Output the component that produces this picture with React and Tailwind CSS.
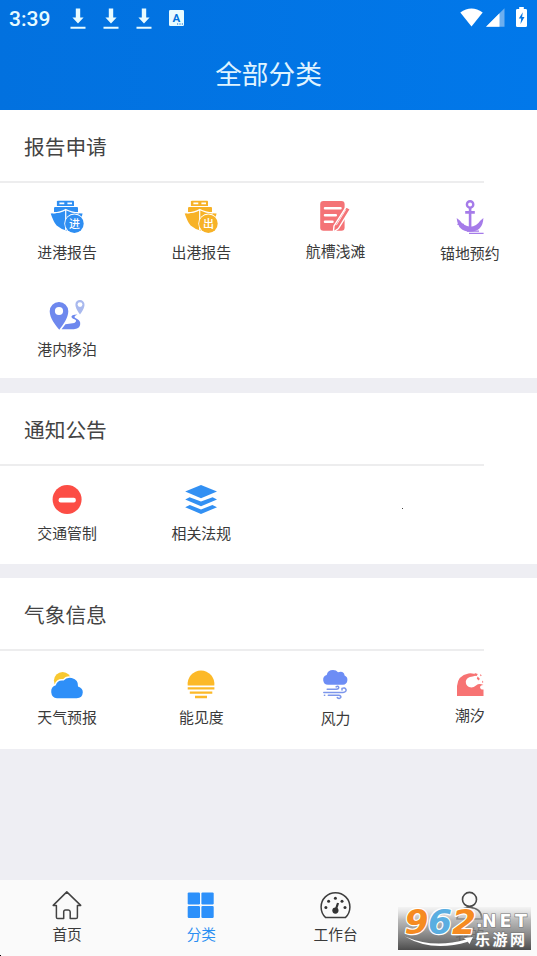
import React from "react";

const Icon = ({ children }) => (
  <svg viewBox="0 0 40 40" className="h-10 w-10 shrink-0" fill="none">
    {children}
  </svg>
);

const Ship = ({ color, mark }) => (
  <Icon>
    <g transform="translate(3 3)">
      <path d="M8 .8H23.2Q24 .8 24 1.6V6H6.9V1.6Q6.9 .8 8 .8Z" fill={color} />
      <path d="M9.4 3.4H14.3M17.4 3.4H22" stroke="#fff" strokeWidth="1.8" />
      <path d="M5.2 7.1H27Q28 7.1 28 8.1V12H4V8.1Q4 7.1 5.2 7.1Z" fill={color} />
      <path d="M.7 13.4Q10 13.4 15.7 9.8Q22 13.4 32.6 13.4Q31 22 24 29L16.4 30.4Q11 29.4 6.6 25.6Q3.4 21.6 .7 13.4Z" fill={color} />
      <path d="M3.2 12.8Q11 12.4 15.7 9.4Q21 12.4 29 12.8M15.7 10V30" stroke="#fff" strokeWidth="1.2" />
      <circle cx="24.4" cy="23.7" r="10.1" fill="#fff" />
      <circle cx="24.4" cy="23.7" r="9.3" fill={color} />
      <text x="24.4" y="27.8" textAnchor="middle" fontSize="11" fontWeight="500" fill="#fff" className="font-['Noto_Sans_CJK_SC',sans-serif]">{mark}</text>
    </g>
  </Icon>
);

const Note = () => (
  <Icon>
    <rect x="4.2" y="4" width="24.4" height="29.8" rx="3.2" fill="#f47376" />
    <path d="M9 11.3H24.5M9 18.2H19.8M9 24.8H16.5" stroke="#fff" strokeWidth="2.5" strokeLinecap="round" />
    <path d="M30.3 9.8L34.4 12.2L22.4 31.6L17.4 35L18 28.9Z" fill="#f47376" stroke="#fff" strokeWidth="1.4" />
    <path d="M29.8 12.6L20.3 28.2" stroke="#fff" strokeWidth=".8" />
  </Icon>
);

const Anchor = () => (
  <Icon>
    <g stroke="#a57be9">
      <circle cx="20.1" cy="7.4" r="3.2" strokeWidth="2.4" />
      <path d="M20.1 10.5V32M15.2 15.4H24.8" strokeWidth="2.6" />
      <path d="M17 34.2H29M19 36.4H33.6M7.4 27.4H14M9.4 29.7H15" strokeWidth="1.2" />
    </g>
    <path d="M6.7 21L9.8 23.6Q13.6 29.2 20.1 29.8Q26.8 29.2 30.2 23.8L33.4 21Q32.8 34.6 20.1 34.8Q7.8 34.4 6.7 21Z" fill="#a57be9" />
  </Icon>
);

const Route = () => (
  <Icon>
    <path d="M12 8A9.2 9.2 0 0 0 2.7 17.3C2.7 24 8.6 31.6 12.3 35.7C16 31 21.3 24 21.3 17.3A9.2 9.2 0 0 0 12 8Z" fill="#6e88ee" />
    <circle cx="12" cy="17" r="4.1" fill="#fff" />
    <path d="M33 6A4.5 4.5 0 0 0 28.4 10.7C28.4 14 31.4 18 33 20.4C34.7 18 37.5 14 37.5 10.7A4.5 4.5 0 0 0 33 6Z" fill="#a9b9ee" />
    <circle cx="33" cy="10.6" r="2.4" fill="#fff" />
    <path d="M30.5 20.4Q23.6 20.6 24.5 23.3Q25 24.5 28 25.6Q30.5 27 27.3 29L18.4 30.2L14.6 35.3H27Q34 34.5 33.2 28.8Q32.8 26 28.8 24.3Q25.5 22.4 30.5 20.4Z" fill="#6e88ee" />
  </Icon>
);

const Stop = () => (
  <Icon>
    <circle cx="20.1" cy="19.5" r="14.5" fill="#fc4d45" />
    <rect x="11.6" y="17.7" width="17.2" height="4.9" rx="2" fill="#fff" />
  </Icon>
);

const Layers = () => (
  <Icon>
    <g fill="#3290f3">
      <path d="M20 5L36 11.6L20 18.2L4.2 11.6Z" />
      <path d="M8.6 17.2L20 21.6L31.6 17.2L36 19.5L20 26.3L4.2 19.5Z" />
      <path d="M8.8 25L20 29.4L31.4 25L36 27.2L20 34.1L4.2 27.2Z" />
    </g>
  </Icon>
);

const Weather = () => (
  <Icon>
    <circle cx="15.6" cy="15.6" r="8.7" fill="#f8c831" />
    <path d="M10 33.3A6.7 6.7 0 0 1 8.8 20.3Q10.3 14.6 16.7 15.5Q19.5 11.8 24.8 12.9Q31.6 14.6 31 21.4Q35.8 23 35.8 27.2Q35.5 33 29.7 33.3Z" fill="#2e8ff8" stroke="#fff" strokeWidth="2.6" paintOrder="stroke" />
  </Icon>
);

const Sunset = () => (
  <Icon>
    <path d="M6.7 20.6A13.4 13.4 0 1 1 33.3 20.6Z" fill="#fcb928" />
    <path d="M6.7 23.4H33.4M8.8 27.6H31.3M14 32H26" stroke="#fcb928" strokeWidth="2.3" />
  </Icon>
);

const Wind = () => (
  <Icon>
    <path d="M12 19.7A4.9 4.9 0 0 1 10.7 10.1Q11.7 5.1 17 5.1Q20.4 5.1 22 7.2Q27.8 5.4 28.6 10.4A4.9 4.9 0 0 1 27 19.7Z" fill="#6d8df5" />
    <path d="M11.2 24.3H20.3Q23 24 22.7 22.2Q21.7 20.6 20.1 21.9M7.8 27.4H27Q30.4 27 30.1 24.7Q29 22 26 23.4L26 25M12.3 30.3H22.7Q25.3 30.5 24.8 32.4Q23.3 34.5 21.3 32.6" stroke="#7c96eb" strokeWidth="1.5" strokeLinecap="round" />
    <path d="M7.8 30.3H9.3" stroke="#7c96eb" strokeWidth="1.4" />
  </Icon>
);

const Tide = () => (
  <Icon>
    <path d="M7 31V21Q7.7 10.4 18.5 8.4Q23.4 7.8 27 10.2L22.6 11.4Q16.6 12 15.8 16.2Q15.6 20.4 19 22Q22.8 23.4 26 20.4Q29.4 17.8 33.5 20.1Q29.4 20.6 30.2 23Q31.2 25.2 33.5 24.4V31Z" fill="#f77373" />
    <path d="M24.6 8L27.8 9L26.6 11L25 10.4Z M27.6 11.4L29.8 13.8L28.8 15.4L26.8 13.8Z M30.4 9L31.8 10.5L30.2 11.2Z M32 15.6L33.5 17L32.3 18Z" fill="#f77373" />
  </Icon>
);

const House = () => (
  <Icon>
    <path d="M9.4 19.4H6.2L19.8 5.9L33.7 19.4H30.4V31.3Q30.4 32.6 29 32.6H23.2V25.8Q23 23.9 21.4 23.9H18.5Q16.8 23.9 16.7 25.8V32.6H10.7Q9.4 32.6 9.4 31.3Z" stroke="#424242" strokeWidth="1.5" strokeLinejoin="round" />
  </Icon>
);

const Tiles = () => (
  <Icon>
    <g fill="#2c90fa">
      <rect x="6.7" y="6.4" width="12.3" height="12.1" rx="1.2" />
      <rect x="20.4" y="6.4" width="12.3" height="12.1" rx="1.2" />
      <rect x="6.7" y="19.9" width="12.3" height="12.1" rx="1.2" />
      <rect x="20.4" y="19.9" width="12.3" height="12.1" rx="1.2" />
    </g>
  </Icon>
);

const Gauge = () => (
  <Icon>
    <path d="M9.7 31.6Q5.1 27.5 5.1 21A14.4 14.3 0 0 1 33.9 21Q33.9 27.5 29.3 31.6Z" stroke="#3d3d3d" strokeWidth="1.5" strokeLinejoin="round" />
    <g fill="#333">
      <circle cx="9.9" cy="21.6" r="1.5" />
      <circle cx="12.6" cy="15.2" r="1.5" />
      <circle cx="19.4" cy="12.2" r="1.5" />
      <circle cx="26" cy="15.2" r="1.5" />
      <circle cx="29" cy="21.6" r="1.5" />
      <circle cx="19.4" cy="24.6" r="3.1" />
    </g>
    <path d="M19.6 24.4L22 17" stroke="#333" strokeWidth="2.2" />
  </Icon>
);

const Person = () => (
  <Icon>
    <circle cx="19.5" cy="13.4" r="7" stroke="#484848" strokeWidth="1.6" />
    <path d="M7 33Q7.5 22 19.5 21.5Q31.5 22 32 33Z" stroke="#484848" strokeWidth="1.6" />
  </Icon>
);

function Item({ icon, label, gap }) {
  return (
    <div className="flex flex-col items-center">
      {icon}
      <div className={`${gap} text-[14.9px] leading-5 whitespace-nowrap text-[#3a3a3a]`}>{label}</div>
    </div>
  );
}

function Section({ title, className, children }) {
  return (
    <section className={`bg-white ${className}`}>
      <h2 className="flex h-[71px] items-center pl-6 text-[20.7px] leading-7 text-[#444]">{title}</h2>
      <div className="h-[2px] w-[484px] bg-[#ededee]" />
      <div className="grid auto-rows-[97px] grid-cols-4 pt-[14px]">{children}</div>
    </section>
  );
}

const Download = () => (
  <svg viewBox="0 0 16 22" className="h-[22px] w-4" fill="#e8fbff">
    <path d="M5.8 .5H10.2V9.5H13.6L8 15.4L2.4 9.5H5.8ZM.5 18.7H15.5V20.7H.5Z" />
  </svg>
);

function StatusBar() {
  return (
    <div className="flex h-[37px] items-center pl-[9px]">
      <span className="w-[61px] font-[Roboto,sans-serif] text-[21px] leading-6 font-medium text-[#e8fbff]">3:39</span>
      <div className="flex items-center gap-[17px]">
        <Download />
        <Download />
        <Download />
      </div>
      <svg viewBox="0 0 15 16" className="ml-[17px] -mt-[2px] h-4 w-[15px]">
        <rect width="15" height="16" rx="1.2" fill="#e8fbff" />
        <text x="7.3" y="11.5" textAnchor="middle" fontSize="11.5" fontWeight="700" fill="#0070dc" className="font-[Roboto,sans-serif]">A</text>
        <path d="M8 14H9.2M10.4 14H11.6M12.8 14H14" stroke="#0070dc" strokeWidth="1.1" />
      </svg>
      <div className="ml-auto flex items-center pr-[10px]">
        <svg viewBox="0 0 23 19" className="-mt-[3px] h-[19px] w-[23px]">
          <path d="M.3 4.4Q11.5-3.6 22.7 4.4L11.5 18.5Z" fill="#fff" />
        </svg>
        <svg viewBox="0 0 19 19" className="ml-[3px] -mt-[2px] h-[19px] w-[19px]">
          <path d="M0 18.8L18.5 .3V18.8Z" fill="#6caeef" />
          <path d="M0 18.8L13.5 5.3V18.8Z" fill="#fff" />
        </svg>
        <svg viewBox="0 0 11 20" className="ml-[11px] -mt-[3px] h-5 w-[11px]">
          <path d="M3.2 0H7.8V2H9.6Q11 2 11 3.3V18.7Q11 20 9.6 20H1.4Q0 20 0 18.7V3.3Q0 2 1.4 2H3.2Z" fill="#fff" />
          <path d="M6.8 5.2L2.8 11.6H5.2L4.5 17L8.5 10H6.1Z" fill="#0475e4" />
        </svg>
      </div>
    </div>
  );
}

function Tab({ icon, label, active }) {
  return (
    <div className="flex flex-col items-center pt-[6px]">
      {icon}
      <div className={`-mt-[2px] text-[14.7px] leading-5 ${active ? "text-[#2b8ff2]" : "text-[#3a3a3a]"}`}>{label}</div>
    </div>
  );
}

function Watermark() {
  return (
    <svg viewBox="0 0 133 43" className="absolute right-[6px] bottom-[6px] h-[43px] w-[133px] overflow-visible">
      <defs>
        <linearGradient id="plate" x1="0" y1="0" x2="0" y2="1">
          <stop offset="0" stopColor="#ccc" stopOpacity=".15" />
          <stop offset=".3" stopColor="#a5a5a5" stopOpacity=".75" />
          <stop offset="1" stopColor="#454545" stopOpacity=".96" />
        </linearGradient>
      </defs>
      <rect width="133" height="43" fill="url(#plate)" />
      <g className="font-['DejaVu_Sans',sans-serif]" fontWeight="700" fontStyle="italic" fontSize="34" stroke="#fff" strokeWidth="2.4" paintOrder="stroke" strokeLinejoin="round">
        <text x="6.5" y="27.4" textLength="24" lengthAdjust="spacingAndGlyphs" fill="#f68b21">9</text>
        <text x="30" y="27.4" textLength="24" lengthAdjust="spacingAndGlyphs" fill="#5aaee1">6</text>
        <text x="54" y="27.4" textLength="24" lengthAdjust="spacingAndGlyphs" fill="#f68b21">2</text>
      </g>
      <g fill="#fff" stroke="#777" strokeWidth="1.2" paintOrder="stroke" fontWeight="700">
        <g className="font-['DejaVu_Sans',sans-serif]" fontSize="17.5">
          <text x="78" y="20">.</text>
          <text x="84" y="20">N</text>
          <text x="101.5" y="20">E</text>
          <text x="117" y="20">T</text>
        </g>
        <text x="77" y="38" fontSize="15" textLength="50" className="font-['Noto_Sans_CJK_SC',sans-serif]">乐游网</text>
      </g>
      <path d="M7 29.5Q36 42 68 32.5L65.5 31L75 30L71.5 37L69.8 34.7Q34 45.5 7 29.5Z" fill="#fff" />
    </svg>
  );
}

export default function App() {
  return (
    <div className="relative flex h-[956px] w-[537px] flex-col overflow-hidden bg-[#eeeef3] font-['Noto_Sans_CJK_SC',sans-serif] font-normal">
      <header className="h-[110px] shrink-0 bg-linear-to-r from-[#0271df] to-[#0178ea]">
        <StatusBar />
        <h1 className="flex h-[71px] items-center justify-center text-[26.7px] leading-9 text-[#e0f4ff]">全部分类</h1>
      </header>
      <main className="relative flex flex-1 flex-col">
        <Section title="报告申请" className="h-[268px]">
          <Item icon={<Ship color="#2e8ef2" mark="进" />} label="进港报告" gap="mt-[5px]" />
          <Item icon={<Ship color="#f7b227" mark="出" />} label="出港报告" gap="mt-[5px]" />
          <Item icon={<Note />} label="航槽浅滩" gap="mt-[4px]" />
          <Item icon={<Anchor />} label="锚地预约" gap="mt-[6px]" />
          <Item icon={<Route />} label="港内移泊" gap="mt-[5px]" />
        </Section>
        <Section title="通知公告" className="mt-[15px] h-[171px]">
          <Item icon={<Stop />} label="交通管制" gap="mt-[3px]" />
          <Item icon={<Layers />} label="相关法规" gap="mt-[3px]" />
        </Section>
        <Section title="气象信息" className="mt-[14px] h-[171px]">
          <Item icon={<Weather />} label="天气预报" gap="mt-[2px]" />
          <Item icon={<Sunset />} label="能见度" gap="mt-[2px]" />
          <Item icon={<Wind />} label="风力" gap="mt-[3px]" />
          <Item icon={<Tide />} label="潮汐" gap="mt-0" />
        </Section>
        <span className="absolute top-[398px] left-[402px] h-px w-px bg-[#444]" />
      </main>
      <nav className="grid h-[76px] shrink-0 grid-cols-4 bg-[#fafafa]">
        <Tab icon={<House />} label="首页" />
        <Tab icon={<Tiles />} label="分类" active />
        <Tab icon={<Gauge />} label="工作台" />
        <Tab icon={<Person />} label="我的" />
      </nav>
      <Watermark />
      <span className="absolute bottom-0 left-0 h-px w-px bg-black" />
    </div>
  );
}
